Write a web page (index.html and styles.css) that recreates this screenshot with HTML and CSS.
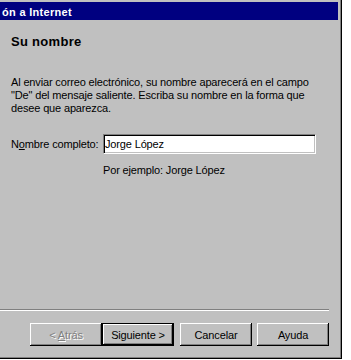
FILE: index.html
```html
<!DOCTYPE html>
<html lang="es">
<head>
  <meta charset="UTF-8">
  <title>Conexión a Internet</title>
  <link rel="stylesheet" href="styles.css">
</head>
<body>
  <div class="window">
    <div class="frame">
      <div class="titlebar">ón a Internet</div>

      <div class="page">
        <h1 class="heading">Su nombre</h1>
        <p class="intro">Al enviar correo electrónico, su nombre aparecerá en el campo "De" del mensaje saliente. Escriba su nombre en la forma que desee que aparezca.</p>

        <div class="field-row">
          <label class="field-label">N<u>o</u>mbre completo:</label>
          <div class="textbox">Jorge López</div>
        </div>
        <div class="hint">Por ejemplo: Jorge López</div>
      </div>

      <div class="separator"></div>

      <div class="buttons">
        <button class="btn btn-disabled">&lt; <u>A</u>trás</button>
        <button class="btn btn-default">Siguiente &gt;</button>
        <button class="btn btn-cancel">Cancelar</button>
        <button class="btn btn-help">Ayuda</button>
      </div>
    </div>
  </div>
</body>
</html>
```

FILE: styles.css
```css
body {
  margin: 0;
  background-color: #fff;
  font-family: 'Liberation Sans', Arial, sans-serif;
  font-size: 11px;
  letter-spacing: -0.15px;
  color: #000;
}

/* outer window frame: black / dark gray on the right and bottom */
.window {
  width: 342px;
  height: 359px;
  box-sizing: border-box;
  background-color: #c0c0c0;
  border-right: 1px solid #000;
  border-bottom: 1px solid #000;
}

.frame {
  height: 100%;
  box-sizing: border-box;
  padding: 2px 2px 0 0;
  border-right: 1px solid #808080;
  border-bottom: 1px solid #808080;
  display: flex;
  flex-direction: column;
}

.titlebar {
  height: 18px;
  box-sizing: border-box;
  padding: 1px 0 0 2px;
  line-height: 18px;
  background-color: #000080;
  color: #fff;
  font-weight: bold;
  letter-spacing: 0.3px;
  white-space: nowrap;
  overflow: hidden;
}

.page {
  flex: 1;
  padding: 0 11px;
}

.heading {
  margin: 14px 0 0;
  font-size: 13px;
  line-height: 16px;
  font-weight: bold;
  letter-spacing: 0.3px;
}

.intro {
  width: 308px;
  margin: 26px 0 0;
  line-height: 13px;
}

.field-row {
  display: flex;
  align-items: center;
  margin-top: 19px;
}

.field-label {
  width: 92px;
  line-height: 13px;
}

.field-label u,
.btn u {
  text-decoration-thickness: 1px;
  text-underline-offset: 1px;
}

/* sunken edit box */
.textbox {
  width: 213px;
  height: 20px;
  box-sizing: border-box;
  padding-left: 1px;
  line-height: 16px;
  background-color: #fff;
  border-top: 1px solid #808080;
  border-left: 1px solid #808080;
  border-bottom: 1px solid #fff;
  border-right: 1px solid #fff;
  box-shadow: inset 1px 1px #000, inset -1px -1px #c0c0c0;
  padding-top: 1px;
}

.hint {
  margin: 10px 0 0 92px;
  line-height: 13px;
}

.separator {
  width: 329px;
  height: 0;
  border-top: 1px solid #808080;
  border-bottom: 1px solid #fff;
}

.buttons {
  display: flex;
  padding: 12px 0 0 30px;
  height: 34px;
}

.btn {
  width: 72px;
  height: 23px;
  padding: 0;
  margin: 0;
  border: none;
  background-color: #c0c0c0;
  font-family: 'Liberation Sans', Arial, sans-serif;
  font-size: 11px;
  letter-spacing: -0.15px;
  color: #000;
  box-shadow: inset -1px -1px #000, inset 1px 1px #fff, inset -2px -2px #808080;
}

.btn-default {
  border: 1px solid #000;
}

.btn-disabled {
  color: #808080;
  text-shadow: 1px 1px #fff;
}

.btn-cancel {
  margin-left: 6px;
}

.btn-help {
  margin-left: 5px;
}
```
